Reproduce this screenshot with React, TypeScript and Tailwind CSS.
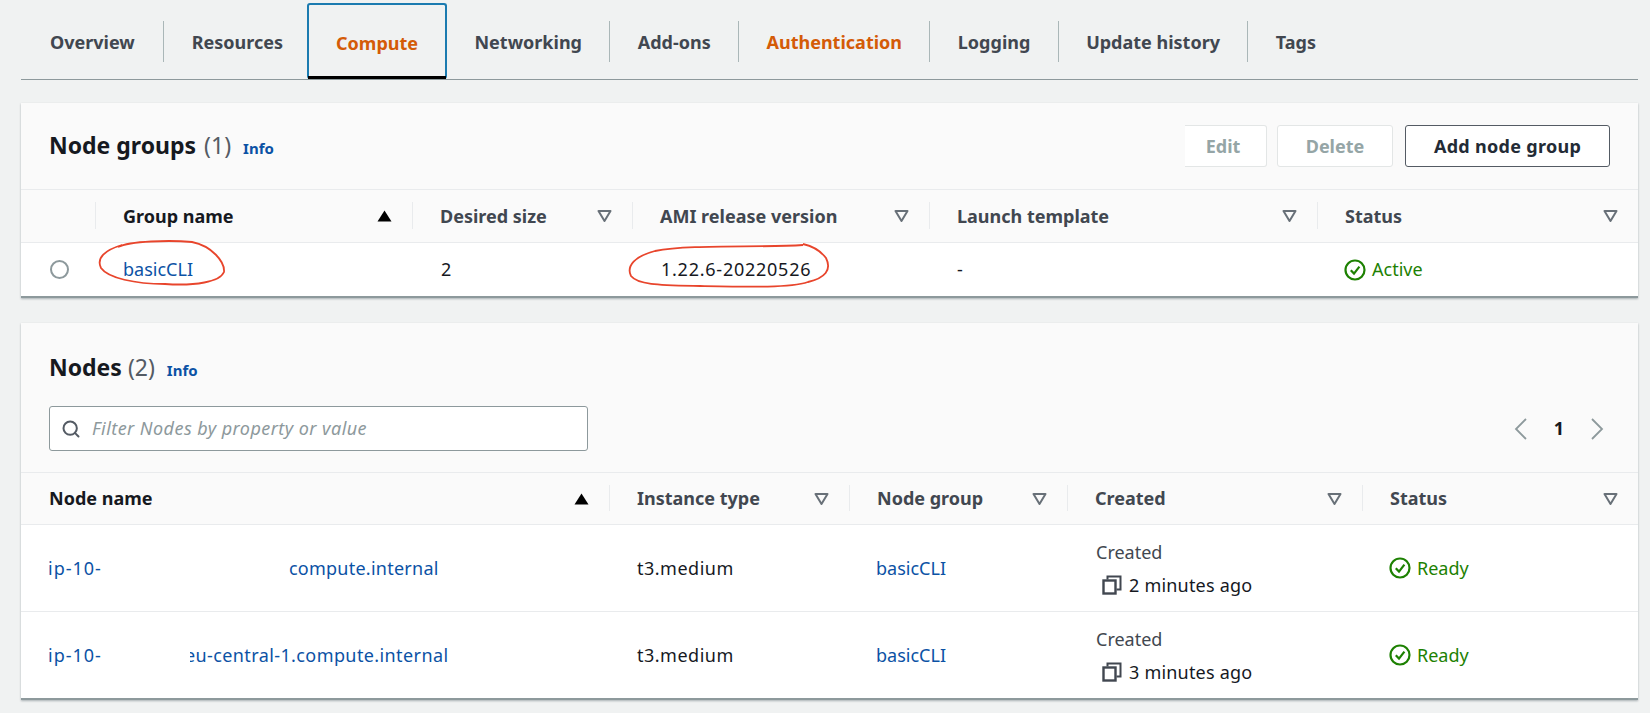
import React from 'react';
import { Search } from 'lucide-react';

const LINK = 'text-[#0b52a5]';

function SortUp() {
  return (
    <svg width="15" height="12" viewBox="0 0 15 12" className="shrink-0">
      <path d="M7.5 0.5 L14.5 11.5 L0.5 11.5 Z" fill="#000" />
    </svg>
  );
}

function SortDown() {
  return (
    <svg width="15" height="12" viewBox="0 0 15 12" className="shrink-0">
      <path d="M1.5 1 L13.5 1 L7.5 11 Z" fill="none" stroke="#687078" strokeWidth="2" strokeLinejoin="round" />
    </svg>
  );
}

function CheckIcon() {
  return (
    <svg width="22" height="22" viewBox="0 0 22 22" className="shrink-0">
      <circle cx="11" cy="11" r="9.5" fill="none" stroke="#1d8102" strokeWidth="2.2" />
      <path d="M6.8 11.2 L10 14.6 L15.4 7.6" fill="none" stroke="#1d8102" strokeWidth="2.2" />
    </svg>
  );
}

function CopyIcon() {
  return (
    <svg width="20" height="20" viewBox="0 0 20 20" className="shrink-0">
      <path d="M5.5 4.5 V1.5 H18.5 V14.5 H14.5" fill="none" stroke="#414750" strokeWidth="2" />
      <rect x="1.5" y="5.5" width="12" height="13" fill="none" stroke="#414750" strokeWidth="2.4" />
    </svg>
  );
}

function Th({ label, sorted, first, dark }: { label?: string; sorted?: boolean; first?: boolean; dark?: boolean }) {
  return (
    <div className="relative flex items-center justify-between pl-[28px] pr-5 h-full">
      {!first && <span className="absolute left-0 top-[12px] bottom-[13px] w-px bg-[#e9ebed]" />}
      <span className={`font-bold ${dark ? 'text-[#16191f]' : 'text-[#414750]'}`}>{label}</span>
      {label && (sorted ? <SortUp /> : <SortDown />)}
    </div>
  );
}

function Tab({ label, active, accent, last, wide }: { label: string; active?: boolean; accent?: boolean; last?: boolean; wide?: boolean }) {
  if (active) {
    return (
      <div className="relative h-[76px] -ml-[4px] px-[27px] pt-[2px] flex items-center font-bold text-[#d45b07] border-2 border-[#1b7bb0] rounded-[3px] border-b-0">
        {label}
        <span className="absolute -left-px -right-px bottom-0 h-[3px] bg-[#000]" />
      </div>
    );
  }
  return (
    <div className={`h-[41px] pt-[2px] flex items-center font-bold ${wide ? 'px-7' : 'px-[27.4px]'} ${accent ? 'text-[#d45b07]' : 'text-[#414750]'} ${last ? '' : 'border-r border-[#aab7b8]'}`}>
      {label}
    </div>
  );
}

function Ready({ text }: { text: string }) {
  return (
    <div className="flex items-center gap-[6px] text-[#1d8102] pl-[27px]">
      <CheckIcon />
      {text}
    </div>
  );
}

function CreatedCell({ ago }: { ago: string }) {
  return (
    <div className="pl-[29px] text-[#414750]">
      <div className="leading-[24px] mb-[9px]">Created</div>
      <div className="flex items-center gap-[7px] pl-[6px] leading-[24px] text-[#16191f] tracking-[0.2px]">
        <CopyIcon />
        {ago}
      </div>
    </div>
  );
}

function NodeRow({ name, time, className }: { name: React.ReactNode; time: string; className: string }) {
  return (
    <div className={`grid grid-cols-[588px_240px_218px_295px_1fr] items-center bg-white ${className}`}>
      <div className={`pl-[27px] flex ${LINK}`}>{name}</div>
      <div className="pl-7 text-[#16191f] tracking-[0.5px]">t3.medium</div>
      <div className={`pl-[27px] ${LINK}`}>basicCLI</div>
      <CreatedCell ago={time} />
      <Ready text="Ready" />
    </div>
  );
}

export default function App() {
  return (
    <div className="w-[1650px] h-[713px] overflow-hidden bg-[#f0f2f2] font-['Noto_Sans',sans-serif] text-[18px] text-[#16191f] relative">
      <div className="ml-[21px] w-[1617px] pt-[3px]">
        {/* tabs */}
        <div className="flex items-center h-[77px] border-b border-[#8d999c] pl-px">
          <Tab label="Overview" wide />
          <Tab label="Resources" wide last />
          <Tab label="Compute" active />
          <Tab label="Networking" />
          <Tab label="Add-ons" />
          <Tab label="Authentication" accent />
          <Tab label="Logging" />
          <Tab label="Update history" />
          <Tab label="Tags" last />
        </div>

        {/* node groups */}
        <section className="relative mt-[23px] bg-[#fafafa] border-b-2 border-[#8d999c] shadow-[0_1px_2px_rgba(0,28,36,0.3)]">
          <div className="h-[87px] flex items-center justify-between pl-[28px] pr-[28px] border-b border-[#e9ebed]">
            <div className="flex items-baseline gap-[8px] pb-[2px]">
              <h2 className="text-[23px] font-bold text-[#16191f]">Node groups</h2>
              <span className="text-[23px] text-[#545b64]">(1)</span>
              <a className={`ml-[4px] text-[15px] font-bold ${LINK}`}>Info</a>
            </div>
            <div className="flex gap-[12px] font-bold">
              <button className="w-[82px] -mr-[2px] pr-[5px] h-[42px] bg-white rounded-r-[3px] border border-l-0 border-[#e3e6e6] text-[#95a5a6]">Edit</button>
              <button className="w-[116px] h-[42px] bg-white rounded-[3px] border border-[#e3e6e6] text-[#95a5a6]">Delete</button>
              <button className="w-[205px] h-[42px] bg-white rounded-[3px] border border-[#545b64] text-[#232b36] tracking-[0.3px]">Add node group</button>
            </div>
          </div>
          <div className="grid grid-cols-[74px_317px_220px_297px_388px_1fr] h-[53px] items-center border-b border-[#e9ebed]">
            <Th first />
            <Th label="Group name" sorted dark />
            <Th label="Desired size" />
            <Th label="AMI release version" />
            <Th label="Launch template" />
            <Th label="Status" />
          </div>
          <div className="grid grid-cols-[74px_317px_220px_297px_388px_1fr] h-[53px] items-center bg-white">
            <div className="pl-[29px]">
              <span className="block w-[19px] h-[19px] rounded-full border-2 border-[#8d999c] bg-white" />
            </div>
            <div className={`pl-7 ${LINK}`}>basicCLI</div>
            <div className="pl-[29px]">2</div>
            <div className="pl-[29px] tracking-[0.75px]">1.22.6-20220526</div>
            <div className="pl-7">-</div>
            <Ready text="Active" />
          </div>
        </section>

        {/* nodes */}
        <section className="mt-[25px] bg-[#fafafa] border-b-2 border-[#8d999c] shadow-[0_1px_2px_rgba(0,28,36,0.3)]">
          <div className="h-[150px] pl-[28px] pr-[34px] border-b border-[#e9ebed]">
            <div className="flex items-baseline gap-[6px] pt-[27px] h-[83px]">
              <h2 className="text-[23px] font-bold text-[#16191f]">Nodes</h2>
              <span className="text-[23px] text-[#545b64]">(2)</span>
              <a className={`ml-[6px] text-[15px] font-bold ${LINK}`}>Info</a>
            </div>
            <div className="flex items-center justify-between">
              <div className="w-[539px] h-[45px] flex items-center gap-[11px] pl-[11px] bg-white rounded-[3px] border border-[#8d999c]">
                <Search size={20} strokeWidth={2.4} className="text-[#545b64]" />
                <span className="italic text-[#8d999c] tracking-[0.45px]">Filter Nodes by property or value</span>
              </div>
              <div className="flex items-center gap-[26px] font-bold">
                <svg width="14" height="22" viewBox="0 0 14 22"><path d="M12 1 L2 11 L12 21" fill="none" stroke="#8d999c" strokeWidth="1.8" /></svg>
                <span>1</span>
                <svg width="14" height="22" viewBox="0 0 14 22"><path d="M2 1 L12 11 L2 21" fill="none" stroke="#8d999c" strokeWidth="1.8" /></svg>
              </div>
            </div>
          </div>
          <div className="grid grid-cols-[588px_240px_218px_295px_1fr] h-[52px] items-center border-b border-[#e9ebed]">
            <Th label="Node name" sorted dark first />
            <Th label="Instance type" />
            <Th label="Node group" />
            <Th label="Created" />
            <Th label="Status" />
          </div>
          <NodeRow
            className="h-[87px] border-b border-[#e9ebed]"
            time="2 minutes ago"
            name={<><span className="tracking-[1px]">ip-10-</span><span className="ml-[187px] tracking-[0.25px]">compute.internal</span></>}
          />
          <NodeRow
            className="h-[86px]"
            time="3 minutes ago"
            name={<><span className="tracking-[1px]">ip-10-</span><span className="ml-[88px] w-[260px] overflow-hidden whitespace-nowrap tracking-[0.4px]"><span className="-ml-[5px]">eu-central-1.compute.internal</span></span></>}
          />
        </section>
      </div>

      {/* hand-drawn annotations on top of the screenshot */}
      <svg className="absolute left-0 top-0 pointer-events-none" width="1650" height="713" viewBox="0 0 1650 713" fill="none" stroke="#e8452c" strokeWidth="1.8">
        <path d="M118 247 C130 241 170 240 192 242 C212 246 225 262 224 272 C220 282 195 286 165 284 C135 284 108 278 101 268 C96 258 105 250 122 245" />
        <path d="M803 245 C760 248 690 244 655 251 C635 256 626 266 631 276 C638 285 660 285 700 286 C750 287 790 288 808 282 C825 278 832 270 826 258 C820 250 812 246 803 244" />
      </svg>
    </div>
  );
}
